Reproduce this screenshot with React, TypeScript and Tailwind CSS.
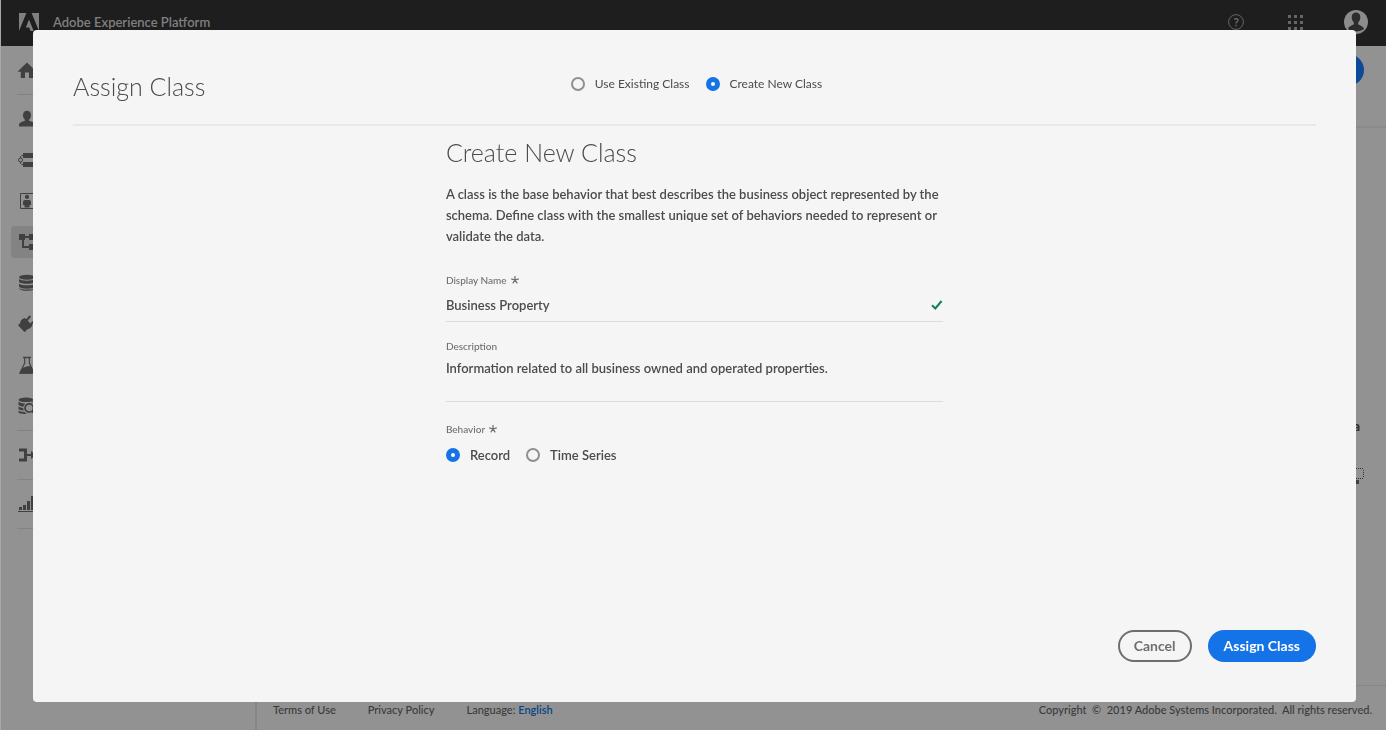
import React, { useState } from "react";

const icons: Record<string, React.ReactNode> = {
  home: <path d="M9 1.500 17.800 10a.4.4 0 0 1-.3.800H15.200V17H11v-5.600H7V17H2.800v-6.200H.5a.4.4 0 0 1-.3-.8Z" />,
  user: <path d="M9 .8c2.600 0 4 1.900 4 4.400 0 1.800-.7 3.200-1.700 4.200-.3.300-.3 1.200.2 1.500C13.500 11.600 16.700 12 17 15v1.600H1V15c.3-3 3.500-3.400 5.500-4.100.500-.3.500-1.200.2-1.500C5.700 8.400 5 7 5 5.200 5 2.700 6.400.8 9 .8Z" />,
  identity: (
    <>
      <path d="M5 2h13v5H5zM5 11h13v5H5z" />
      <path d="M5 4.500H3.800L2.500 5.800V7M2.500 11v1.200l1.300 1.300H5" fill="none" stroke="currentColor" />
      <circle cx="2.500" cy="9" r="2" fill="none" stroke="currentColor" />
    </>
  ),
  segment: (
    <>
      <path d="M2.500 1.500h14v15h-14z" fill="none" stroke="currentColor" />
      <circle cx="9" cy="4.900" r="2.100" />
      <path d="M7 8h4a2 2 0 0 1 2 2v3h-1.500v2.500h-5V13H5v-3a2 2 0 0 1 2-2Z" />
    </>
  ),
  schema: (
    <>
      <path d="M1 1h6v6H1zM11 1h6v6h-6zM11 11h6v6h-6z" />
      <path d="M7 4h4M5 7v7h6" fill="none" stroke="currentColor" strokeWidth="2" />
    </>
  ),
  dataset: (
    <>
      <ellipse cx="9" cy="3.300" rx="8" ry="2.500" />
      <path d="M1 4.900c1.700 2.300 14.300 2.300 16 0v2.900c-1.700 2.700-14.300 2.700-16 0ZM1 9.400c1.700 2.500 14.300 2.500 16 0v3.400c-.9 1.200-4 2-8 2s-7.100-.8-8-2ZM1 14c2 2 14 2 16 0v.5c-1 1.500-4 2.300-8 2.300s-7-.8-8-2.300Z" />
    </>
  ),
  plug: (
    <>
      <path d="M7 3 14.500 10.500 12 13.200c-1 .8-2 1-3 1.300L7.500 16.500c-.5.500-1 .500-1.500 0L.7 11c-.6-.6-.6-1 0-1.500l1.500-1.500C2.500 5.500 3.500 4 7 3Z" />
      <path d="M8.500 5.500 12.300 1M12.500 9.500l4.500-4" fill="none" stroke="currentColor" strokeWidth="2" />
    </>
  ),
  flask: (
    <>
      <path d="M5 .800h8v1.400H5z" />
      <path d="M6.700 2v5L1.800 17.200h14.400L11.300 7V2" fill="none" stroke="currentColor" strokeWidth="1.100" />
      <path d="M4.500 12 8.500 10.500l4-.5 4 7.500h-15Z" />
    </>
  ),
  query: (
    <>
      <ellipse cx="8" cy="2.800" rx="7.500" ry="2.300" />
      <path d="M.5 4.500c1.500 1.500 4 2 7 2-1.200 1-1.800 2-2 3.200-2.500-.2-4-.8-5-1.900ZM.5 9.300c1.200 1.200 2.600 1.600 4.700 1.800 0 .8.300 1.600.7 2.400C3.400 13.300 1.500 13 .5 12ZM.5 13.600c1.500 1 3.400 1.400 6 1.500l2.300 1.800C5 17.100 1.500 16.700.5 15.500ZM15.500 4.300v1.500a6 6 0 0 0-3-.6Z" />
      <circle cx="11.200" cy="11" r="4.200" fill="none" stroke="currentColor" strokeWidth="1.700" />
      <path d="m14 14 3.500 3.500" stroke="currentColor" strokeWidth="2" />
    </>
  ),
  merge: <path d="M1 2.500h8V8h4V5l5 4-5 4v-3H9v5.500H1v-3h5v-7H1Z" />,
  chart: <path d="M0 16h18v1H0zM1 12h3v3H1zM5 10h3v5H5zM9 6h3v9H9zM13 1h3v14h-3z" />,
};

function Icon({ name }: { name: string }) {
  return (
    <svg viewBox="0 0 18 18" className="size-[18px]" fill="currentColor" aria-hidden="true">
      {icons[name]}
    </svg>
  );
}

function NavGroup({ names, active }: { names: string[]; active?: string }) {
  return (
    <ul className="flex flex-col gap-[9px]">
      {names.map((name) => (
        <li key={name}>
          <a
            href="#"
            aria-label={name}
            className={
              name === active
                ? "flex h-8 items-center rounded bg-[#838383] pl-[7px]"
                : "flex h-8 items-center rounded pl-[7px]"
            }
          >
            <Icon name={name} />
          </a>
        </li>
      ))}
    </ul>
  );
}

function Divider() {
  return <hr className="my-2 ml-1.5 border-t border-[#838383]" />;
}

function Radio({
  name,
  label,
  checked,
  onSelect,
}: {
  name: string;
  label: string;
  checked: boolean;
  onSelect: () => void;
}) {
  return (
    <label className="flex items-center gap-2.5">
      <input
        type="radio"
        name={name}
        checked={checked}
        onChange={onSelect}
        className="size-3.5 shrink-0 appearance-none rounded-full border-2 border-[#909090] bg-[#f5f5f5] checked:border-5 checked:border-[#1473e6] checked:bg-white"
      />
      {label}
    </label>
  );
}

function Required() {
  return (
    <svg viewBox="0 0 8 8" className="size-2" fill="none" stroke="currentColor" strokeWidth="1.200" aria-hidden="true">
      <path d="M4 4V0M4 4 .2 2.900M4 4l3.800-1.100M4 4 1.700 7.300M4 4l2.300 3.300" />
    </svg>
  );
}

function TopBar() {
  return (
    <header className="flex h-[46px] items-start bg-[#1e1e1e] pr-[18px] pl-[18px] text-[#808080]">
      <svg viewBox="0 0 20 18" className="mt-[13px] h-[18px] w-5" fill="currentColor" aria-hidden="true">
        <path d="M0 0h7.400L0 18ZM12.600 0H20v18ZM10 6.600 14.700 18h-3.100l-1.400-3.600H6.800Z" />
      </svg>
      <span className="mt-3 ml-3.5 text-[13px] leading-5 font-semibold">Adobe Experience Platform</span>
      <div className="mt-2.5 ml-auto flex items-center">
        <button type="button" aria-label="Help" className="text-[#666666]">
          <svg viewBox="0 0 16 16" className="size-4" fill="none" stroke="currentColor" aria-hidden="true">
            <circle cx="8" cy="8" r="7.400" />
            <path d="M6 5.300c2-1.200 4-.6 4 .9C10 7.800 8 7.800 8 9.500M8 10.700v1.600" strokeWidth="1.500" />
          </svg>
        </button>
        <button type="button" aria-label="Apps" className="ml-11 text-[#666666]">
          <svg viewBox="0 0 15 15" className="size-[15px]" fill="currentColor" aria-hidden="true">
            <path d="M0 0h3v3H0zM6 0h3v3H6zM12 0h3v3h-3zM0 6h3v3H0zM6 6h3v3H6zM12 6h3v3h-3zM0 12h3v3H0zM6 12h3v3H6zM12 12h3v3h-3z" />
          </svg>
        </button>
        <button type="button" aria-label="Account" className="ml-[41px]">
          <svg viewBox="0 0 24 24" className="size-6" aria-hidden="true">
            <circle cx="12" cy="12" r="12" fill="#8c8c8c" />
            <path
              d="M12 2.500c2.700 0 4.300 2 4.300 4.700 0 2-.7 3.600-1.800 4.800-.6.700-.6 2.300.3 2.800 1.400.8 4.500 1.500 5.200 4.300-2 1.600-4.800 2.400-8 2.400s-6-.8-8-2.400c.7-2.800 3.800-3.500 5.200-4.300.9-.5.900-2.100.3-2.800-1.100-1.200-1.800-2.800-1.800-4.800 0-2.700 1.600-4.700 4.300-4.700Z"
              fill="#2c2c2c"
            />
          </svg>
        </button>
      </div>
    </header>
  );
}

function Workspace() {
  return (
    <div className="flex min-w-0 flex-1 flex-col">
      <div className="flex h-[82px] justify-end border-b-2 border-[#8a8a8a] pt-2 pr-[22px]">
        <button type="button" aria-label="Save" className="h-8 w-20 rounded-full bg-[#0c4a97]" />
      </div>
      <div className="flex flex-1 flex-col items-end pt-[288px] pr-[22px]">
        <span className="mr-1 text-sm leading-5 font-bold text-[#2c2c2c]">a</span>
        <svg viewBox="0 0 16 18" className="mt-8 h-[18px] w-4" fill="none" stroke="#333333" aria-hidden="true">
          <path d="M0 .5h16M0 10.500h16M.5 2v8M15.500 2v8" strokeDasharray="1 1" />
          <path d="M7 12h4v4H7z" fill="#404040" stroke="none" />
        </svg>
      </div>
      <footer className="flex h-[45px] items-center gap-8 border-t border-[#868686] pt-1 pr-3.5 pl-4 text-[11px] font-medium text-[#3a3a3a]">
        <a href="#">Terms of Use</a>
        <a href="#">Privacy Policy</a>
        <span>
          Language:{" "}
          <a href="#" className="font-semibold text-[#0c4484]">
            English
          </a>
        </span>
        <span className="ml-auto whitespace-pre">Copyright  ©  2019 Adobe Systems Incorporated.  All rights reserved.</span>
      </footer>
    </div>
  );
}

function AssignClassDialog() {
  const [source, setSource] = useState("new");
  const [behavior, setBehavior] = useState("record");
  const [name, setName] = useState("Business Property");
  const [description, setDescription] = useState(
    "Information related to all business owned and operated properties."
  );

  return (
    <section
      role="dialog"
      aria-modal="true"
      aria-labelledby="dialog-title"
      className="flex flex-1 flex-col overflow-auto rounded bg-[#f5f5f5] px-10 pb-10 text-[#4b4b4b]"
    >
      <header className="grid h-24 shrink-0 grid-cols-[1fr_auto_1fr] items-center border-b-2 border-[#e8e8e8] pt-3.5">
        <h1 id="dialog-title" className="pt-1 text-[25px] leading-8 font-light text-[#4b4b4b]">
          Assign Class
        </h1>
        <div role="radiogroup" aria-label="Class source" className="flex gap-4 pl-1 text-xs leading-5">
          <Radio name="source" label="Use Existing Class" checked={source === "existing"} onSelect={() => setSource("existing")} />
          <Radio name="source" label="Create New Class" checked={source === "new"} onSelect={() => setSource("new")} />
        </div>
      </header>

      <form id="class-form" className="mx-auto w-2/5 flex-1 pt-2.5" onSubmit={(e) => e.preventDefault()}>
        <h2 className="text-[25px] leading-8 font-light text-[#4b4b4b]">Create New Class</h2>
        <p className="mt-4 text-[13px] leading-[21px] font-semibold">
          A class is the base behavior that best describes the business object represented by the schema. Define class
          with the smallest unique set of behaviors needed to represent or validate the data.
        </p>

        <label htmlFor="display-name" className="mt-[25px] flex items-center gap-1 text-[10px] leading-4 font-medium text-[#6e6e6e]">
          Display Name <Required />
        </label>
        <div className="flex h-[34px] items-center border-b border-[#dcdcdc]">
          <input
            id="display-name"
            value={name}
            onChange={(e) => setName(e.target.value)}
            className="min-w-0 flex-1 bg-transparent text-[13px] leading-5 font-semibold outline-none"
          />
          <svg viewBox="0 0 12 10" className="h-2.5 w-3" fill="none" stroke="#12805c" strokeWidth="2" aria-label="Valid">
            <path d="M1 5.300 4.300 8.500 10.600 1" />
          </svg>
        </div>

        <label htmlFor="description" className="mt-4 block text-[10px] leading-4 font-medium text-[#6e6e6e]">
          Description
        </label>
        <textarea
          id="description"
          value={description}
          onChange={(e) => setDescription(e.target.value)}
          className="block h-12 w-full resize-none border-b border-[#dcdcdc] bg-transparent pt-1 text-[13px] leading-5 font-semibold outline-none"
        />

        <fieldset className="mt-[19px]">
          <legend className="flex items-center gap-1 text-[10px] leading-4 font-medium text-[#6e6e6e]">
            Behavior <Required />
          </legend>
          <div className="mt-2 flex gap-4 text-[13px] leading-5 font-semibold">
            <Radio name="behavior" label="Record" checked={behavior === "record"} onSelect={() => setBehavior("record")} />
            <Radio name="behavior" label="Time Series" checked={behavior === "series"} onSelect={() => setBehavior("series")} />
          </div>
        </fieldset>
      </form>

      <footer className="flex justify-end gap-4 text-sm font-bold">
        <button type="button" className="h-8 rounded-full border-2 border-[#6e6e6e] px-3.5 text-[#6e6e6e]">
          Cancel
        </button>
        <button type="submit" form="class-form" className="h-8 rounded-full bg-[#1473e6] px-4 text-white">
          Assign Class
        </button>
      </footer>
    </section>
  );
}

export default function App() {
  return (
    <div className="relative flex min-h-screen flex-col border-l border-[#a8a8a8] bg-[#929292] font-['Lato','Open_Sans',sans-serif]">
      <TopBar />
      <div className="flex flex-1">
        <nav aria-label="Main" className="w-64 shrink-0 border-r-2 border-[#868686] pt-2 pl-2.5 text-[#404040]">
          <NavGroup names={["home"]} />
          <Divider />
          <NavGroup
            names={["user", "identity", "segment", "schema", "dataset", "plug", "flask", "query"]}
            active="schema"
          />
          <Divider />
          <NavGroup names={["merge"]} />
          <Divider />
          <NavGroup names={["chart"]} />
          <Divider />
        </nav>
        <Workspace />
      </div>
      <div className="fixed inset-0 flex pt-[30px] pr-[30px] pb-7 pl-[33px]">
        <AssignClassDialog />
      </div>
    </div>
  );
}
